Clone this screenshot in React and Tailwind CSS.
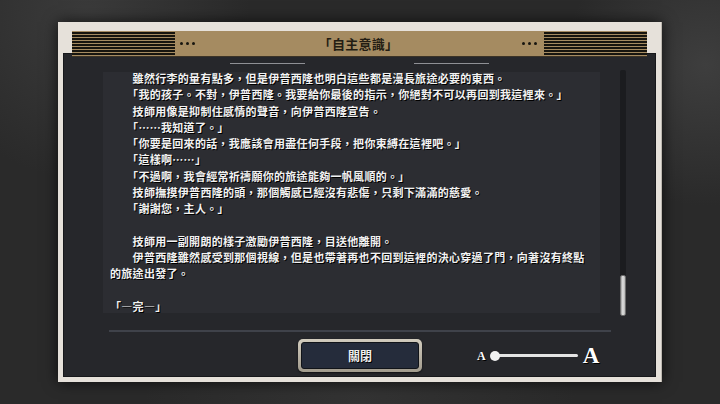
import React from 'react';

const lines = [
  '　　雖然行李的量有點多，但是伊普西隆也明白這些都是漫長旅途必要的東西。',
  '　　「我的孩子。不對，伊普西隆。我要給你最後的指示，你絕對不可以再回到我這裡來。」',
  '　　技師用像是抑制住感情的聲音，向伊普西隆宣告。',
  '　　「……我知道了。」',
  '　　「你要是回來的話，我應該會用盡任何手段，把你束縛在這裡吧。」',
  '　　「這樣啊……」',
  '　　「不過啊，我會經常祈禱願你的旅途能夠一帆風順的。」',
  '　　技師撫摸伊普西隆的頭，那個觸感已經沒有悲傷，只剩下滿滿的慈愛。',
  '　　「謝謝您，主人。」',
  '',
  '　　技師用一副開朗的樣子激勵伊普西隆，目送他離開。',
  '　　伊普西隆雖然感受到那個視線，但是也帶著再也不回到這裡的決心穿過了門，向著沒有終點',
  '的旅途出發了。',
  '',
  '「―完―」',
];

function Stripes() {
  return (
    <div className="flex flex-col gap-[1px] w-[103px]">
      {[0, 1, 2, 3, 4, 5, 6, 7].map((i) => (
        <div key={i} className="h-[2px] bg-[#17150f]" />
      ))}
    </div>
  );
}

function Dots() {
  return (
    <div className="flex gap-[3px]">
      <span className="w-[3px] h-[3px] rounded-full bg-[#17150f]" />
      <span className="w-[3px] h-[3px] rounded-full bg-[#17150f]" />
      <span className="w-[3px] h-[3px] rounded-full bg-[#17150f]" />
    </div>
  );
}

export default function App() {
  return (
    <div className="w-[720px] h-[404px] overflow-hidden bg-[#2a2a2a] bg-[image:radial-gradient(circle_at_12%_4%,#3b3b3b_0,transparent_22%),radial-gradient(circle_at_98%_16%,#3e3e3e_0,transparent_18%),radial-gradient(circle_at_50%_100%,#333_0,transparent_40%)] flex justify-center pt-[22px] font-['Noto_Sans_CJK_TC',sans-serif]">
      <div className="w-[604px] h-[360px] bg-[#e6e1da] px-[5px] pb-[5px] pt-[9px] flex flex-col shadow-[0_0_14px_rgba(0,0,0,0.7)] border-r border-[#bdb8b0]">
        {/* header */}
        <div className="relative z-10 mx-[9px] h-[26px] bg-[#a58b61] border-b border-[#3b3327] flex items-center">
          <Stripes />
          <div className="ml-[5px]"><Dots /></div>
          <div className="flex-1 text-center text-[13px] font-bold text-[#231d13] tracking-[0.3px]">「自主意識」</div>
          <div className="mr-[7px]"><Dots /></div>
          <Stripes />
        </div>

        {/* panel */}
        <div className="-mt-[4px] flex-1 bg-[#26272b] border border-[#17181b] flex flex-col">
          <div className="h-[18px] flex items-center justify-center gap-[109px]">
            <div className="w-[75px] h-px bg-[#8f9095]" />
            <div className="w-[75px] h-px bg-[#8f9095]" />
          </div>

          <div className="h-[241px] flex items-start">
            <div className="ml-[39px] w-[497px] h-[241px] bg-[#2c2d32] pl-[7px]">
              <div className="-mt-[2px] text-[11px] leading-[16.25px] tracking-[0.3px] font-bold text-[#f2f2f2] [text-shadow:1px_1px_0_#000] whitespace-nowrap">
                {lines.map((l, i) => (
                  <div key={i} className="h-[16.25px]">{l}</div>
                ))}
              </div>
            </div>
            <div className="ml-[20px] -mt-[2px] w-[6px] h-[246px] bg-[#1b1c1f] rounded-[2px] flex flex-col justify-end">
              <div className="h-[41px] rounded-[2px] bg-[linear-gradient(to_right,#9d9d9d,#e2e2e2_45%,#b4b4b4)] border border-[#6c6c6c]" />
            </div>
          </div>

          <div className="mt-[17px] ml-[45px] w-[502px] h-[2px] bg-[#3f424a]" />

          <div className="mt-[7px] flex items-center">
            <div className="ml-[234px] w-[124px] h-[33px] rounded-[5px] p-[3px] bg-[linear-gradient(to_bottom,#d2ccbe,#a19b8d)] shadow-[0_1px_2px_rgba(0,0,0,0.6)]">
              <div className="w-full h-full rounded-[3px] bg-[#252c3b] border border-[#111419] flex items-center justify-center text-[12px] font-bold text-[#f0f0f0] [text-shadow:1px_1px_0_#000]">
                關閉
              </div>
            </div>

            <div className="ml-[55px] flex items-center">
              <span className="font-['Liberation_Serif',serif] font-bold text-[12px] text-white [text-shadow:1px_1px_0_#000] leading-none">A</span>
              <div className="relative ml-[4px] w-[88px] h-[10px] flex items-center">
                <div className="ml-[5px] w-[83px] h-[3px] rounded-full bg-[#e4e4e4]" />
                <div className="absolute left-0 top-0 w-[10px] h-[10px] rounded-full bg-[#f2f2f2]" />
              </div>
              <span className="ml-[5px] font-['Liberation_Serif',serif] font-bold text-[23px] text-white [text-shadow:1px_1px_0_#000] leading-none">A</span>
            </div>
          </div>
        </div>
      </div>
    </div>
  );
}
